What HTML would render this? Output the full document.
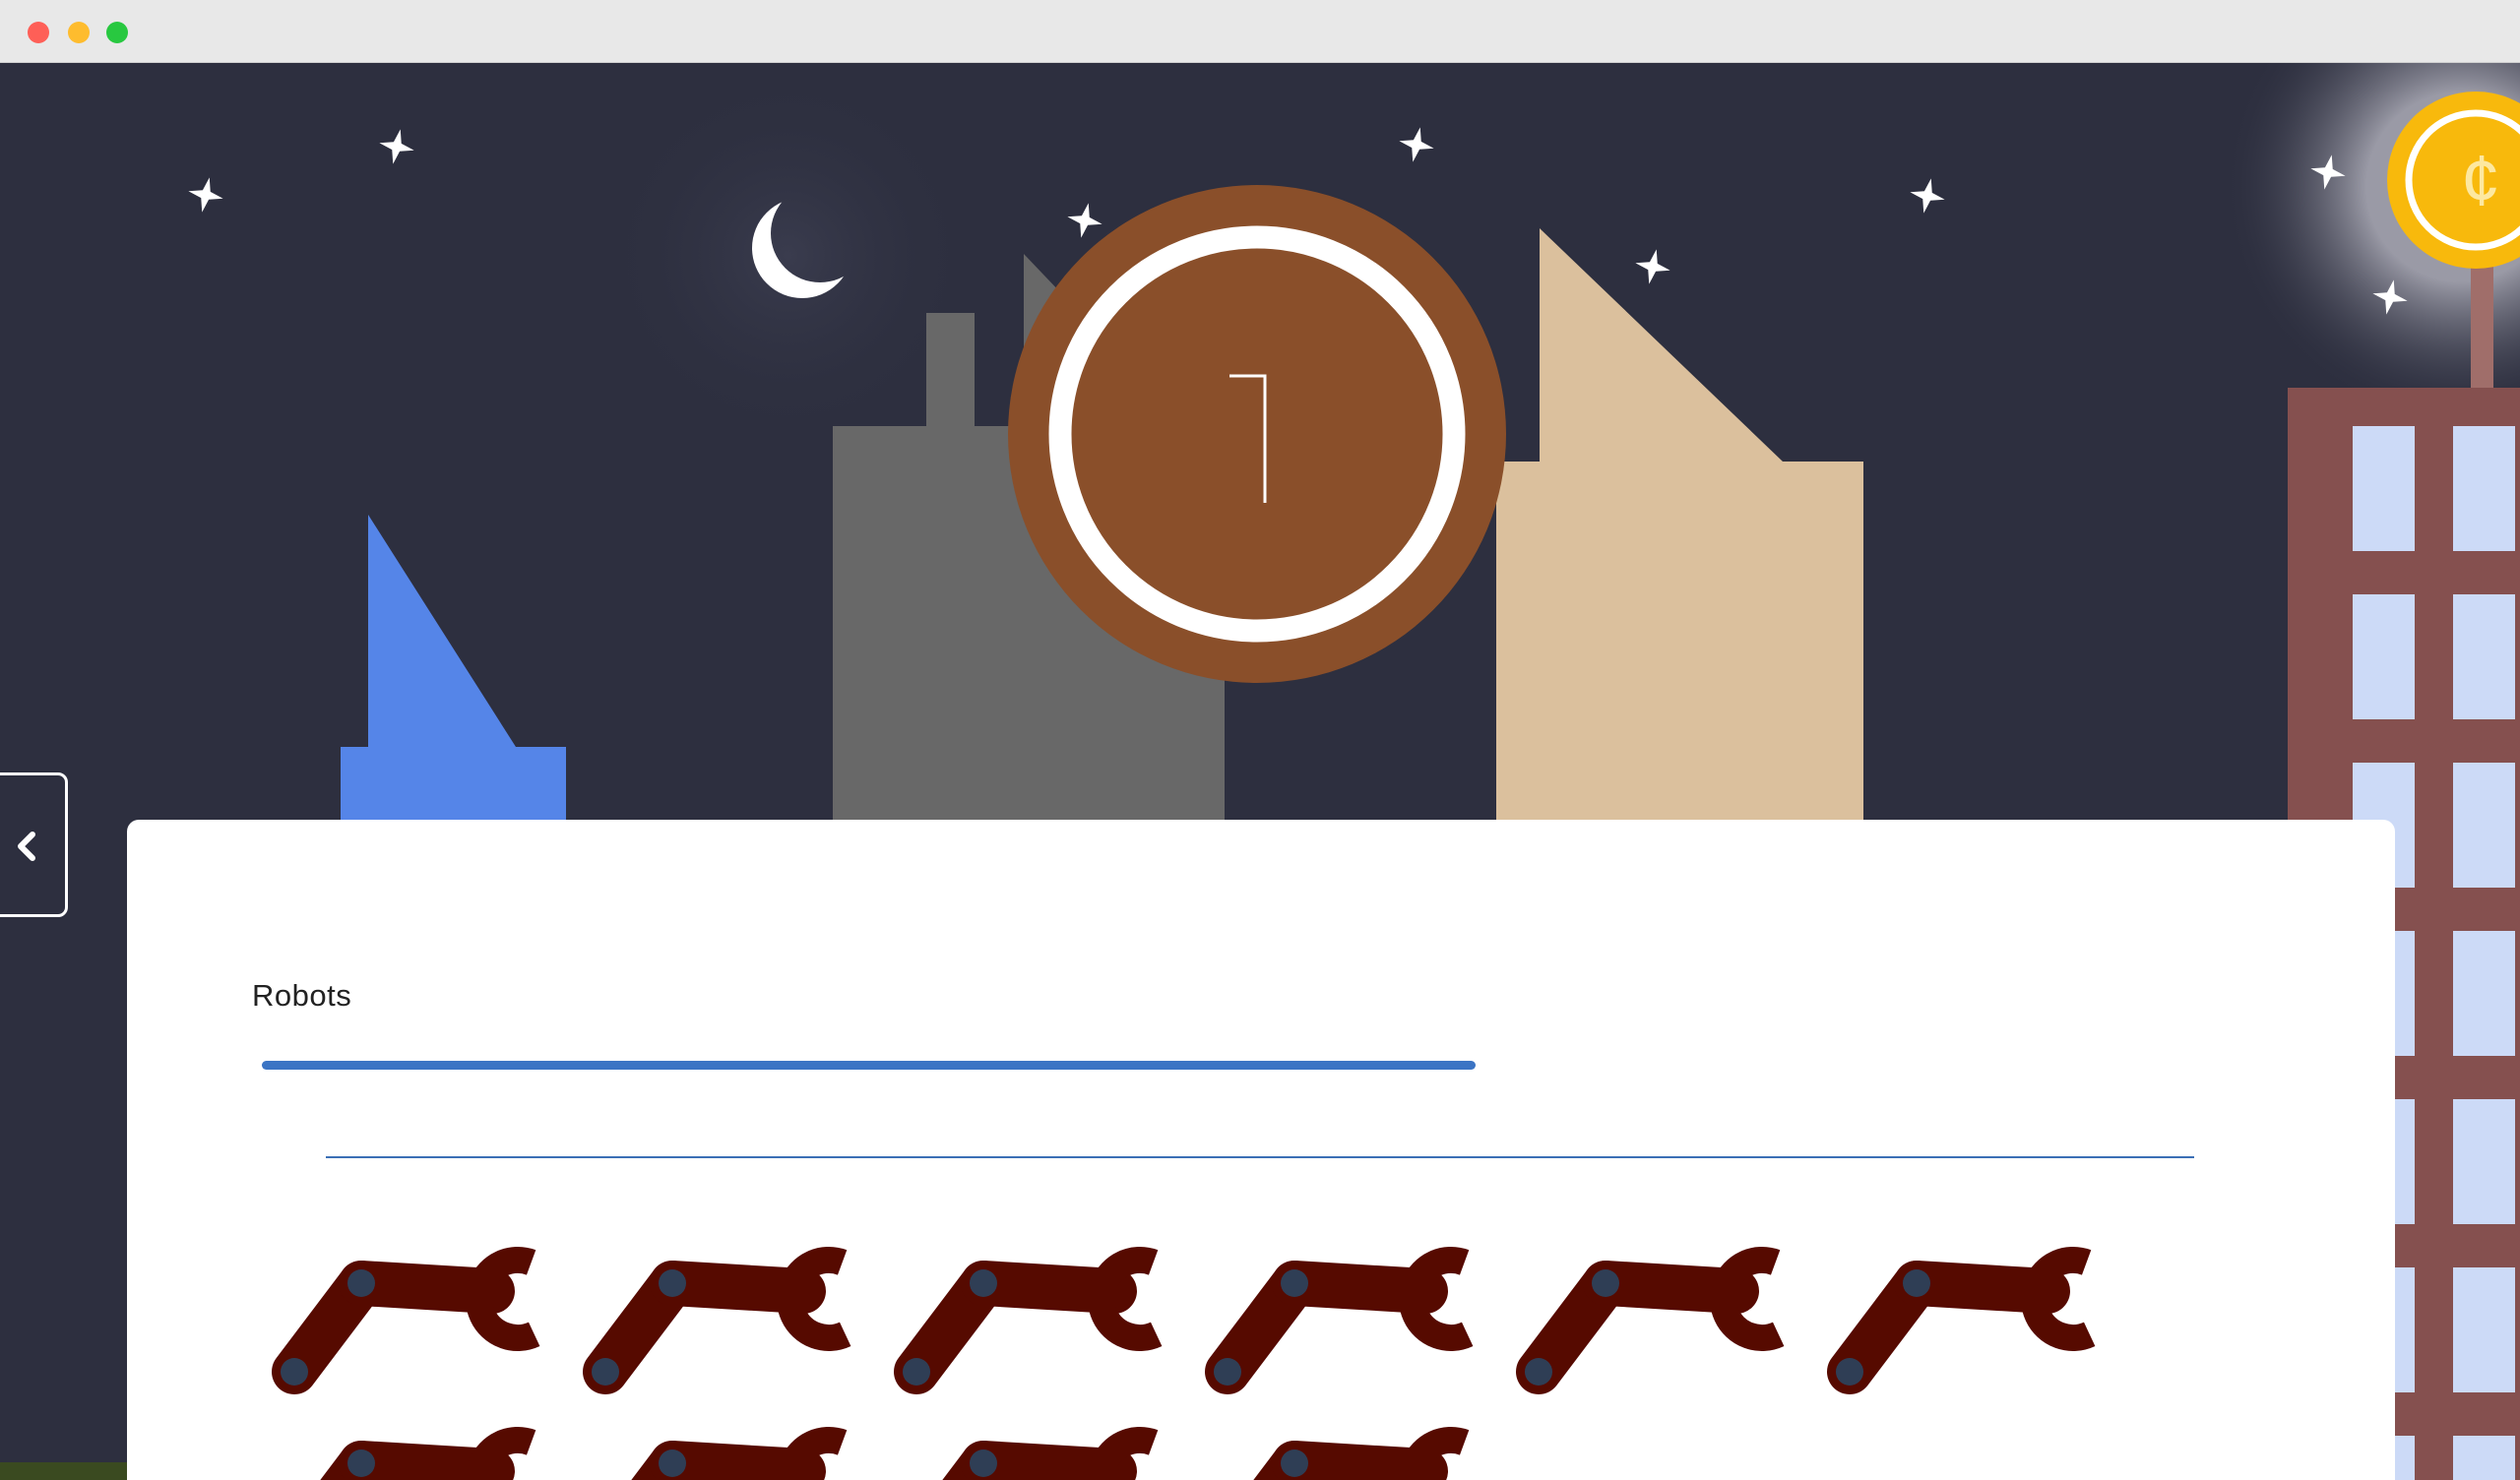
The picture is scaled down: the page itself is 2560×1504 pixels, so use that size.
<!DOCTYPE html>
<html><head><meta charset="utf-8"><style>
html,body{margin:0;padding:0;width:2560px;height:1504px;overflow:hidden;background:#2d2f3f;font-family:"Liberation Sans",sans-serif;position:relative}
svg{display:block}
.bar{position:absolute;left:0;top:0;width:2560px;height:64px;background:#e8e8e8;border-bottom:1px solid #d0d0d0;box-sizing:border-box}
.dot{position:absolute;top:22px;width:22px;height:22px;border-radius:50%}
svg.bg{position:absolute;left:0;top:64px}
.card{position:absolute;left:129px;top:833px;width:2304px;height:671px;background:#fff;border-radius:12px 12px 0 0}
.tab{position:absolute;left:-6px;top:785px;width:75px;height:147px;border:3px solid #fff;border-radius:0 10px 10px 0;box-sizing:border-box;overflow:hidden}
.title{position:absolute;left:256px;top:994px;font-size:31px;font-weight:300;color:#222;letter-spacing:0.5px;line-height:36px}
.pbar{position:absolute;left:266px;top:1078px;width:1233px;height:9px;border-radius:5px;background:#3b74c4}
.line{position:absolute;left:331px;top:1175px;width:1898px;height:2px;background:#3b6fb5}
svg.rob{position:absolute;left:0;top:0}
</style></head><body>
<svg class="bg" width="2560" height="1440" viewBox="0 64 2560 1440">
<defs>
<radialGradient id="mg"><stop offset="0" stop-color="#3a3c4e"/><stop offset="1" stop-color="#2d2f3f" stop-opacity="0"/></radialGradient>
<radialGradient id="gg"><stop offset="0.4" stop-color="#9a9aa6"/><stop offset="1" stop-color="#2d2f3f" stop-opacity="0"/></radialGradient>
<path id="st" d="M0,-18 L4,-4 L18,0 L4,4 L0,18 L-4,4 L-18,0 L-4,-4Z" fill="#fff"/>
<mask id="mm"><rect x="700" y="150" width="250" height="200" fill="#fff"/><circle cx="833" cy="237" r="50" fill="#000"/></mask>
</defs>
<rect x="0" y="64" width="2560" height="1440" fill="#2d2f3f"/>
<circle cx="800" cy="260" r="190" fill="url(#mg)"/>
<circle cx="2500" cy="190" r="240" fill="url(#gg)"/>
<use href="#st" transform="translate(209,198) rotate(12)"/>
<use href="#st" transform="translate(403,149) rotate(12)"/>
<use href="#st" transform="translate(1102,224) rotate(12)"/>
<use href="#st" transform="translate(1439,147) rotate(12)"/>
<use href="#st" transform="translate(1679,271) rotate(12)"/>
<use href="#st" transform="translate(1958,199) rotate(12)"/>
<use href="#st" transform="translate(2365,175) rotate(12)"/>
<use href="#st" transform="translate(2428,302) rotate(12)"/>
<circle cx="815" cy="252" r="51" fill="#fff" mask="url(#mm)"/>
<path d="M374,523 L524,759 L575,759 L575,840 L346,840 L346,759 L374,759Z" fill="#5585e8"/>
<path d="M1040,258 L1080,300 L1080,433 L1040,433Z" fill="#686868"/>
<rect x="941" y="318" width="49" height="120" fill="#686868"/>
<rect x="846" y="433" width="398" height="410" fill="#686868"/>
<path d="M1520,469 L1564,469 L1564,232 L1811,469 L1893,469 L1893,840 L1520,840Z" fill="#dbc09d"/>
<circle cx="1277" cy="441" r="253" fill="#8a4f2a"/>
<circle cx="1277" cy="441" r="200" fill="none" stroke="#fff" stroke-width="23"/>
<path d="M1249,382 L1285,382 L1285,511" fill="none" stroke="#fff" stroke-width="3"/>
<rect x="2510" y="269" width="23" height="130" fill="#a06e6a"/>
<rect x="2324" y="394" width="236" height="1110" fill="#85504f"/>
<g fill="#ccdaf7">
<rect x="2390" y="433" width="63" height="127"/><rect x="2492" y="433" width="63" height="127"/>
<rect x="2390" y="604" width="63" height="127"/><rect x="2492" y="604" width="63" height="127"/>
<rect x="2390" y="775" width="63" height="127"/><rect x="2492" y="775" width="63" height="127"/>
<rect x="2390" y="946" width="63" height="127"/><rect x="2492" y="946" width="63" height="127"/>
<rect x="2390" y="1117" width="63" height="127"/><rect x="2492" y="1117" width="63" height="127"/>
<rect x="2390" y="1288" width="63" height="127"/><rect x="2492" y="1288" width="63" height="127"/>
<rect x="2390" y="1459" width="63" height="45"/><rect x="2492" y="1459" width="63" height="45"/>
</g>
<circle cx="2515" cy="183" r="90" fill="#f8b90c"/>
<circle cx="2515" cy="183" r="68" fill="none" stroke="#fff" stroke-width="7"/>
<text x="2520" y="208" font-family="Liberation Sans, sans-serif" font-size="72" fill="#fde8a0" text-anchor="middle">¢</text>
<rect x="0" y="1486" width="129" height="18" fill="#3a4a20"/>
</svg>
<div class="bar">
<div class="dot" style="left:28px;background:#fe5f57"></div>
<div class="dot" style="left:69px;background:#febc2e"></div>
<div class="dot" style="left:108px;background:#28c840"></div>
</div>
<div class="tab"><svg width="69" height="141" style="position:absolute;left:0;top:0"><path d="M36,60 L24,72 L36,84" fill="none" stroke="#fff" stroke-width="6" stroke-linecap="round" stroke-linejoin="round"/></svg></div>
<div class="card"></div>
<div class="title">Robots</div>
<div class="pbar"></div>
<div class="line"></div>
<svg class="rob" width="2560" height="1504" viewBox="0 0 2560 1504">
<defs>
<g id="r">
<line x1="299" y1="1394" x2="367" y2="1304" stroke="#560a00" stroke-width="46" stroke-linecap="round"/>
<line x1="367" y1="1304" x2="500" y2="1312" stroke="#560a00" stroke-width="46" stroke-linecap="round"/>
<circle cx="526" cy="1320" r="39.5" fill="none" stroke="#560a00" stroke-width="27" stroke-dasharray="155 93" transform="rotate(65 526 1320)"/>
<circle cx="299" cy="1394" r="14" fill="#2f3e55"/>
<circle cx="367" cy="1304" r="14" fill="#2f3e55"/>
</g>
</defs>
<use href="#r"/>
<use href="#r" transform="translate(316,0)"/>
<use href="#r" transform="translate(632,0)"/>
<use href="#r" transform="translate(948,0)"/>
<use href="#r" transform="translate(1264,0)"/>
<use href="#r" transform="translate(1580,0)"/>
<use href="#r" transform="translate(0,183)"/>
<use href="#r" transform="translate(316,183)"/>
<use href="#r" transform="translate(632,183)"/>
<use href="#r" transform="translate(948,183)"/>
</svg>
</body></html>
